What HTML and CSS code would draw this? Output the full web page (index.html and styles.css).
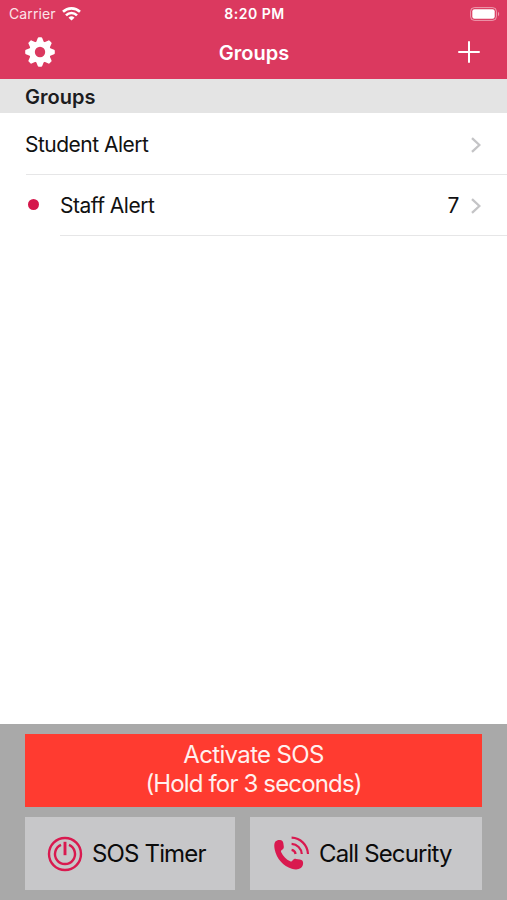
FILE: index.html
```html
<!DOCTYPE html>
<html lang="en">
<head>
  <meta charset="UTF-8" />
  <meta name="viewport" content="width=device-width, initial-scale=1" />
  <title>Groups</title>
  <link rel="stylesheet" href="styles.css">
</head>
<body>

<header>
  <div class="status-bar">
    <div class="carrier">
      <span>Carrier</span>
      <svg width="19" height="14" viewBox="0 0 19 14" fill="none" stroke="#fff" stroke-width="2.6">
        <path d="M1 4.8a12.2 12.2 0 0 1 17 0" />
        <path d="M4 8.300a7.800 7.800 0 0 1 11 0" />
        <path d="M9.500 13.500L6.500 10.700a4.300 4.300 0 0 1 6 0z" fill="#fff" stroke="none" />
      </svg>
    </div>
    <span class="time">8:20 PM</span>
    <svg class="battery" width="30" height="14" viewBox="0 0 30 14">
      <rect x=".6" y=".6" width="25.8" height="12.8" rx="3.8" fill="none" stroke="#fff" stroke-opacity=".5" />
      <rect x="2.3" y="2.3" width="22.4" height="9.4" rx="2.2" fill="#fff" />
      <path d="M28 4.8c1.6.8 1.6 3.6 0 4.4z" fill="#fff" fill-opacity=".5" />
    </svg>
  </div>
  <nav class="nav-bar">
    <svg class="gear" width="30" height="30" viewBox="-15 -15 30 30">
      <g fill="#fff">
        <g id="teeth">
          <path id="tooth" d="M-4.2-9L-2.2-14.1Q-1.9-14.8-1.2-14.8H1.2Q1.9-14.8 2.2-14.1L4.2-9V9L2.2 14.1Q1.9 14.8 1.2 14.8H-1.2Q-1.9 14.8-2.2 14.1L-4.2 9z" />
          <use href="#tooth" transform="rotate(90)" />
        </g>
        <use href="#teeth" transform="rotate(45)" />
        <circle r="10.8" />
      </g>
      <circle r="5.2" fill="#db395f" />
    </svg>
    <h1>Groups</h1>
    <svg class="add" width="22" height="22" viewBox="0 0 22 22" stroke="#fff" stroke-width="2" stroke-linecap="round">
      <path d="M11 1v20M1 11h20" />
    </svg>
  </nav>
</header>

<main>
  <h2>Groups</h2>
  <div class="row">
    <span class="name">Student Alert</span>
    <svg class="chevron" width="10" height="16" viewBox="0 0 10 16"><path d="M1 1.200L8.400 8L1 14.800" /></svg>
  </div>
  <div class="row unread">
    <span class="dot"></span>
    <span class="name">Staff Alert</span>
    <span class="count">7</span>
    <svg class="chevron" width="10" height="16" viewBox="0 0 10 16"><path d="M1 1.200L8.400 8L1 14.800" /></svg>
  </div>
</main>

<footer>
  <button class="sos" type="button">
    <span class="sos-title">Activate SOS</span>
    <span class="sos-hint">(Hold for 3 seconds)</span>
  </button>
  <div class="actions">
    <button class="timer" type="button">
      <svg width="36" height="36" viewBox="0 0 36 36" fill="none" stroke="#d9194f" stroke-width="2.4">
        <circle cx="18" cy="18" r="16" />
        <path d="M14 8.900a10 10 0 1 0 8 0" />
        <path d="M18 5.800v13.400" stroke-width="2.900" />
      </svg>
      <span class="timer-label">SOS Timer</span>
    </button>
    <button class="call" type="button">
      <svg width="36" height="36" viewBox="0 0 36 36" fill="none" stroke="#d9194f" stroke-width="2.2">
        <path d="M1.4 5.6C2.500 4.400 4.300 3.700 6 4c2 .3 3 1.300 3.300 3l.5 3.500c.2 1.600-.4 2.500-2 3.500-1 .7-1 1.300-.6 2.200 1.800 4 5 7.200 9 9 1 .4 1.600.3 2.300-.6 1-1.300 2-1.900 3.500-1.700l4 .7c2 .4 3 1.500 3.100 3.200.1 1.900-.7 4.200-2.300 5.300-2.200 1.600-5.600 1.700-9 .7C9.300 30.200 2.500 22.500.7 13.500.1 10.400 0 7.300 1.400 5.600z" fill="#d9194f" stroke="none" />
        <path d="M17.600 1.700A17 17 0 0 1 34 18" />
        <path d="M17.600 7.900A10.800 10.800 0 0 1 27.800 18" />
        <path d="M17.600 13.900A5 5 0 0 1 21.600 18" />
      </svg>
      <span class="call-label">Call Security</span>
    </button>
  </div>
</footer>

</body>
</html>
```
FILE: styles.css
```css
* {
  box-sizing: border-box;
}

body {
  font-family: Inter, "Liberation Sans", sans-serif;
  background: #fff;
  color: #111;
  margin: 0;
  height: 900px;
  display: flex;
  flex-direction: column;
}

svg {
  display: block;
  flex: none;
}

span, h1, h2 {
  white-space: nowrap;
}

header {
  background: #db395f;
  color: #fff;
  height: 79px;
}

.status-bar {
  display: grid;
  grid-template-columns: 1fr auto 1fr;
  align-items: center;
  height: 27px;
  padding: 0 7px 0 9px;
  font-size: 14px;
}

.carrier {
  display: flex;
  align-items: center;
  gap: 6px;
  color: #fbe3e9;
  letter-spacing: 0.1px;
}

.time {
  font-weight: 600;
  letter-spacing: 0.5px;
}

.battery {
  justify-self: end;
}

.nav-bar {
  display: grid;
  grid-template-columns: 1fr auto 1fr;
  align-items: center;
  height: 50px;
  padding: 0 27px 0 25px;
}

h1 {
  margin: 0;
  padding: 1px 0 0 3px;
  font-size: 20px;
  font-weight: 600;
}

.add {
  justify-self: end;
}

main {
  flex: 1;
}

h2 {
  margin: 0;
  height: 34px;
  line-height: 37px;
  padding-left: 25px;
  background: #e4e4e4;
  color: #1c1c1e;
  font-size: 20px;
  font-weight: 600;
}

.row {
  display: flex;
  align-items: center;
  height: 62px;
  margin-left: 26px;
  padding: 2px 26px 0 0;
  border-bottom: 1px solid #e6e6e7;
  font-size: 21px;
  letter-spacing: -0.5px;
}

.name {
  flex: 1;
  margin-left: -1px;
}

.unread {
  position: relative;
  height: 61px;
  padding-top: 1px;
  margin-left: 60px;
}

.unread .name {
  margin-left: 0;
}

.dot {
  position: absolute;
  left: -32px;
  top: 24px;
  width: 11px;
  height: 11px;
  border-radius: 50%;
  background: #d5174b;
}

.count {
  margin-right: 12px;
}

.chevron {
  fill: none;
  stroke: #c4c4c6;
  stroke-width: 2.3;
}

footer {
  height: 176px;
  padding: 10px 25px;
  background: #a9a9a9;
}

button {
  border: none;
  padding: 0;
  border-radius: 0;
  font-family: inherit;
  font-size: 24px;
  letter-spacing: -0.85px;
  color: #0b0b0b;
}

.sos {
  display: flex;
  flex-direction: column;
  align-items: center;
  width: 457px;
  height: 73px;
  padding-top: 6px;
  background: #ff3b30;
  color: #fff0ee;
  line-height: 29px;
}

.sos-title {
  letter-spacing: -0.65px;
}

.actions {
  display: flex;
  gap: 15px;
  margin-top: 10px;
}

.timer, .call {
  display: flex;
  align-items: center;
  gap: 9px;
  height: 73px;
  background: #c7c7c9;
}

.timer {
  width: 210px;
  padding-left: 22px;
}

.call {
  width: 232px;
  padding-left: 24px;
}
```
